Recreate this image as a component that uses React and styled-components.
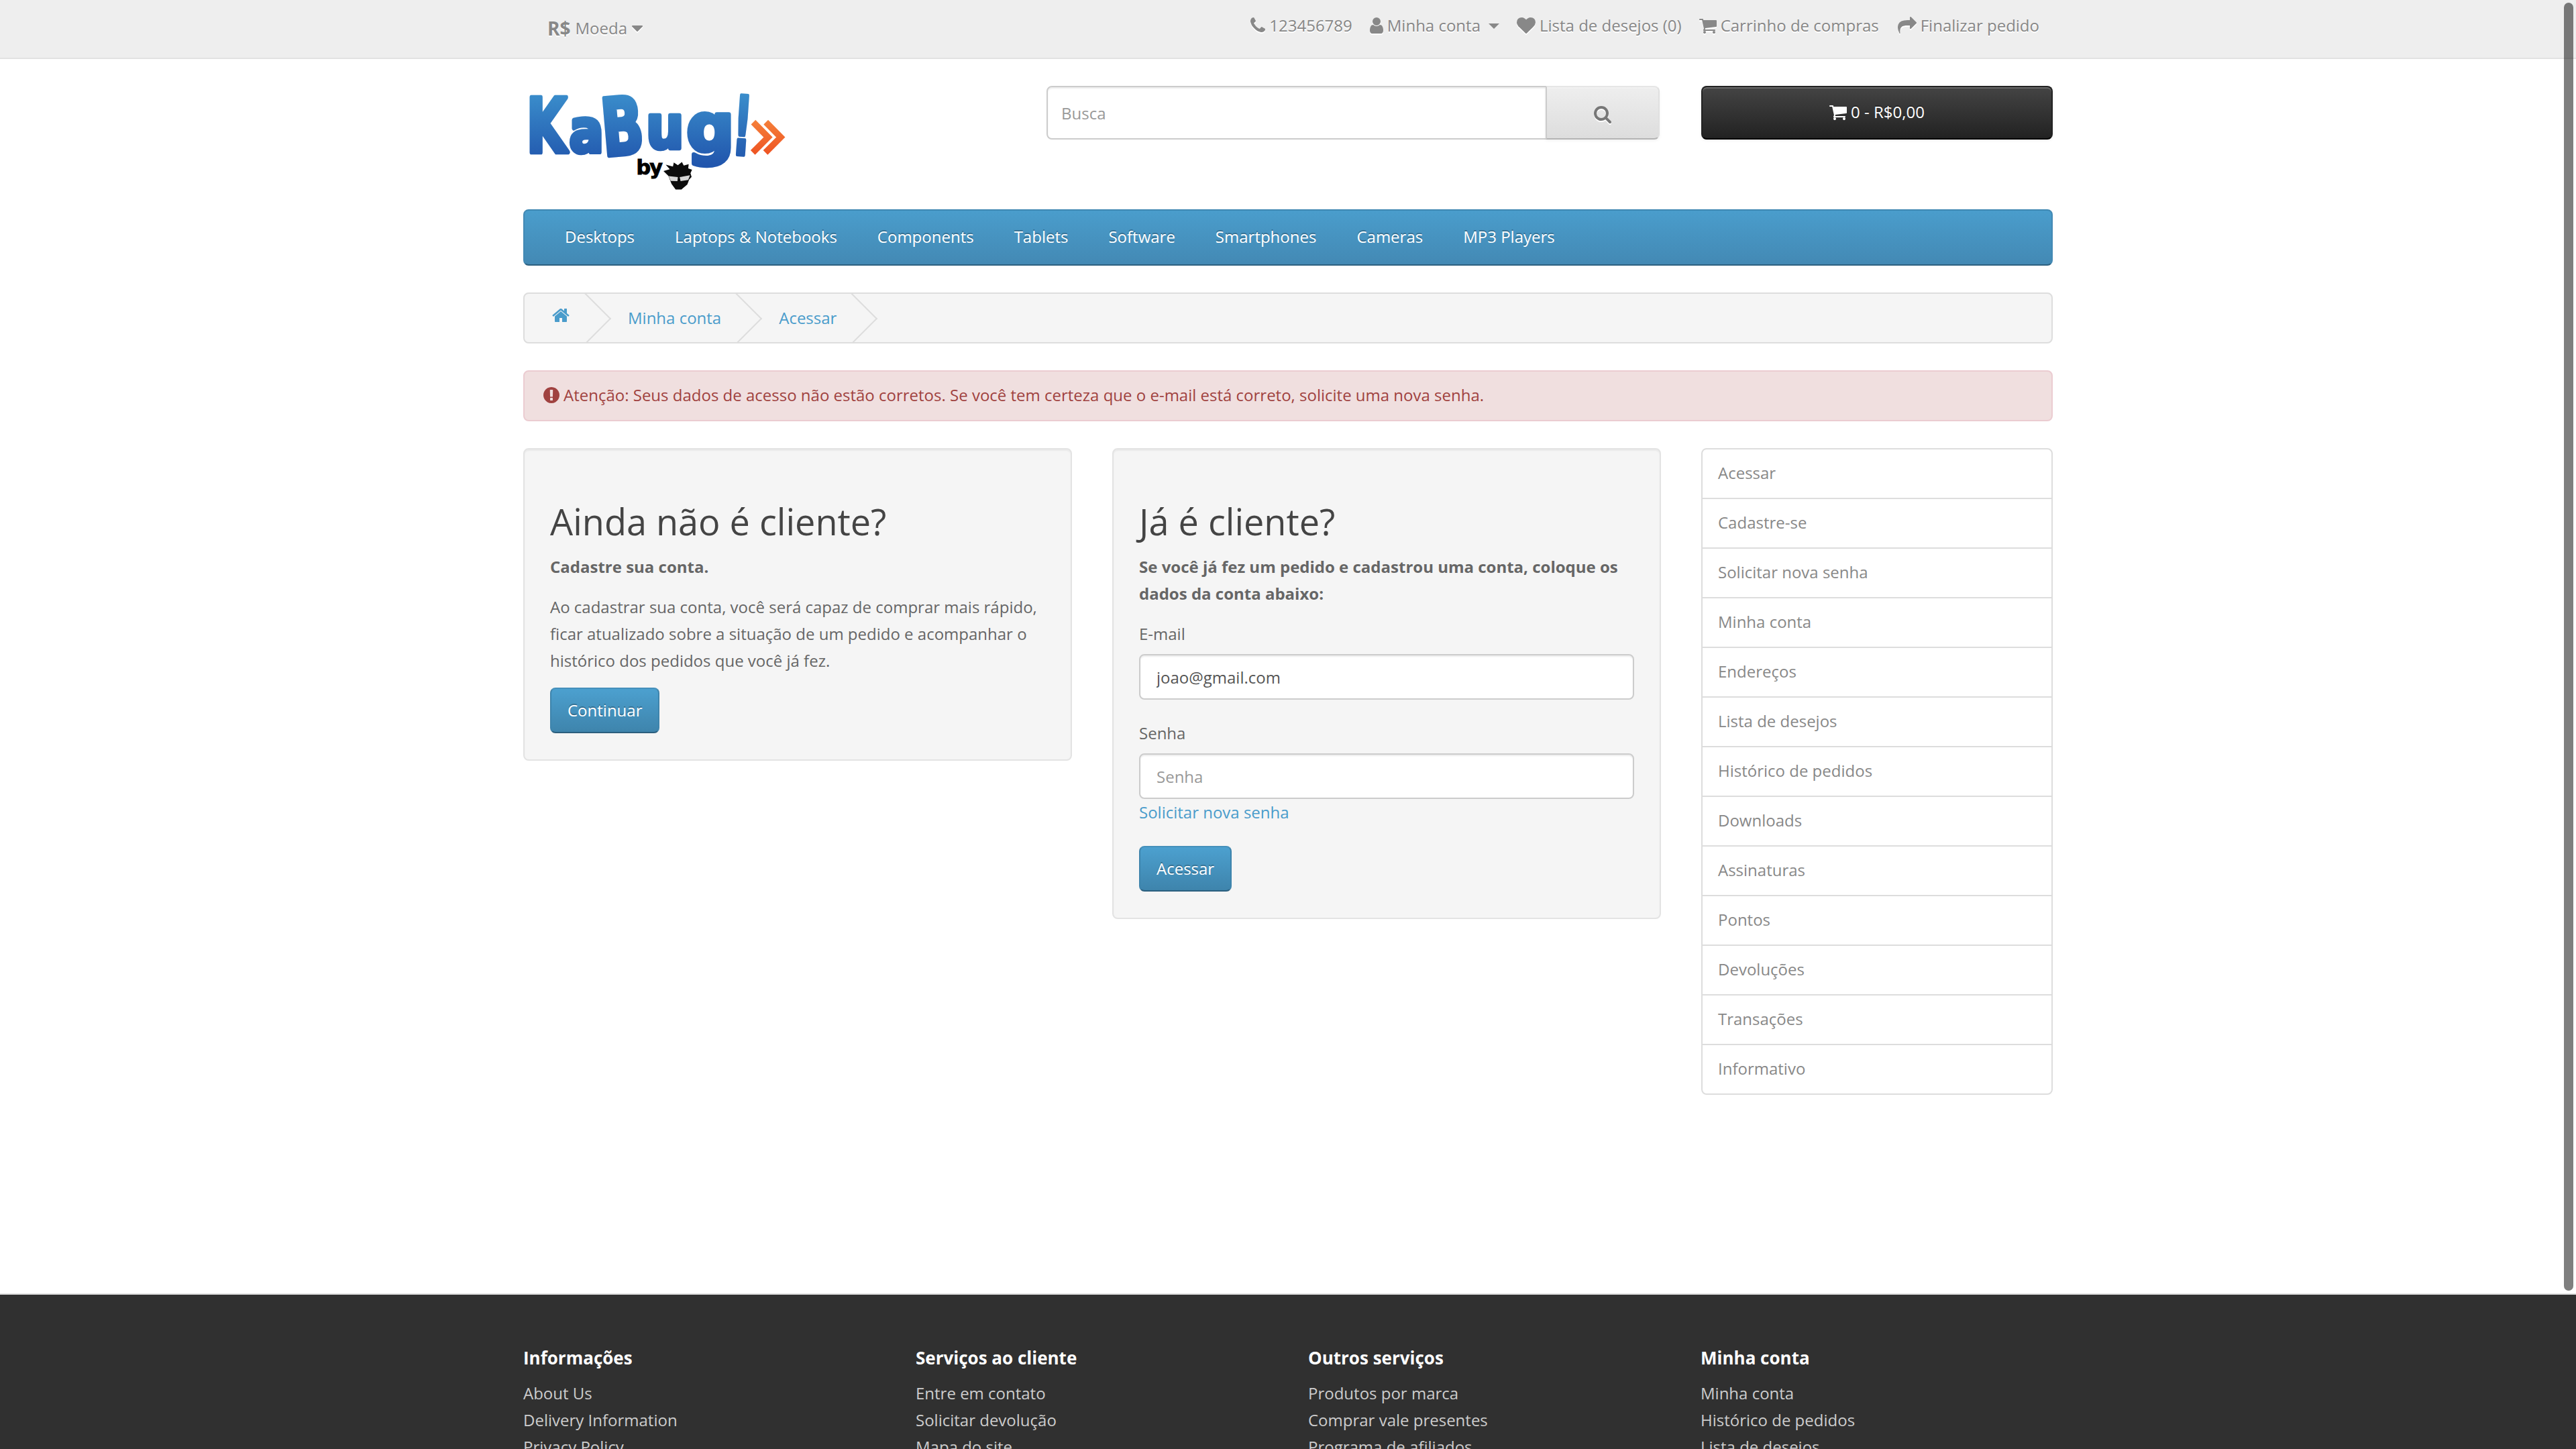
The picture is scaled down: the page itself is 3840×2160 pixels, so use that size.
import React from 'react';
import styled, { createGlobalStyle } from 'styled-components';

const Global = createGlobalStyle`
  html, body { margin: 0; padding: 0; height: 2160px; overflow: hidden; background: #fff; }
  body { font-family: "Open Sans", "Liberation Sans", sans-serif; font-size: 24px; line-height: 40px; color: #666; }
  * { box-sizing: border-box; }
  a { text-decoration: none; color: inherit; }
  ul { list-style: none; margin: 0; padding: 0; }
`;

const ICONS = {
  phone: 'M1600 1240q0 27-10 70.500t-21 68.500q-21 50-122 106-94 51-186 51-27 0-53-3.500t-57.500-12.500-47-14.500-55.500-20.500-49-18q-98-35-175-83-127-79-264-216t-216-264q-48-77-83-175-3-9-18-49t-20.500-55.500-14.500-47-12.500-57.500-3.500-53q0-92 51-186 56-101 106-122 25-11 68.500-21t70.500-10q14 0 21 3 18 6 53 76 11 19 30 54t35 63.500 31 53.500q3 4 17.500 25t21.500 35.500 7 28.500q0 20-28.500 50t-62 55-62 53-28.500 46q0 9 5 22.500t8.500 20.500 14 24 11.500 19q76 137 174 235t235 174q2 1 19 11.500t24 14 20.500 8.500 22.500 5q18 0 46-28.500t53-62 55-62 50-28.500q14 0 28.500 7t35.500 21.500 25 17.500q25 15 53.500 31t63.500 35 54 30q70 35 76 53 3 7 3 21z',
  user: 'M1536 1399q0 109-62.500 187t-150.500 78h-854q-88 0-150.500-78t-62.500-187q0-85 8.500-160.500t31.500-152 58.500-131 94-89 134.500-34.500q131 128 313 128t313-128q76 0 134.500 34.500t94 89 58.500 131 31.500 152 8.500 160.500zm-256-887q0 159-112.500 271.500t-271.500 112.500-271.500-112.500-112.500-271.500 112.500-271.500 271.500-112.500 271.500 112.500 112.500 271.500z',
  heart: 'M896 1664q-26 0-44-18l-624-602q-10-8-27.500-26t-55.500-65.500-68-97.500-53.500-121-23.500-138q0-220 127-344t351-124q62 0 126.500 21.500t120 58 95.500 68.500 76 68q36-36 76-68t95.500-68.500 120-58 126.500-21.500q224 0 351 124t127 344q0 221-229 450l-623 600q-18 18-44 18z',
  cart: 'M704 1536q0 52-38 90t-90 38-90-38-38-90 38-90 90-38 90 38 38 90zm896 0q0 52-38 90t-90 38-90-38-38-90 38-90 90-38 90 38 38 90zm128-1088v512q0 24-16.500 42.500t-40.500 21.500l-1044 122q13 60 13 70 0 16-24 64h920q26 0 45 19t19 45-19 45-45 19h-1024q-26 0-45-19t-19-45q0-11 8-31.500t16-36 21.500-40 15.500-29.500l-177-823h-204q-26 0-45-19t-19-45 19-45 45-19h256q16 0 28.500 6.500t19.500 15.500 13 24.500 8 26 5.500 29.500 4.500 26h1201q26 0 45 19t19 45z',
  share: 'M1792 640q0 26-19 45l-512 512q-19 19-45 19t-45-19-19-45v-256h-224q-98 0-175.500 6t-154 21.500-133 42.500-105.500 69.500-80 101-48.500 138.500-17.500 181q0 55 5 123 0 6 2.500 23.500t2.500 26.500q0 15-8.500 25t-23.500 10q-16 0-28-17-7-9-13-22t-13.500-30-10.500-24q-127-285-127-451 0-199 53-333 162-403 875-403h224v-256q0-26 19-45t45-19 45 19l512 512q19 19 19 45z',
  search: 'M1216 832q0-185-131.500-316.500t-316.500-131.500-316.500 131.500-131.500 316.500 131.500 316.500 316.500 131.500 316.500-131.500 131.500-316.500zm512 832q0 52-38 90t-90 38q-54 0-90-38l-343-342q-179 124-399 124-143 0-273.500-55.500t-225-150-150-225-55.500-273.500 55.500-273.500 150-225 225-150 273.500-55.500 273.500 55.500 225 150 150 225 55.500 273.500q0 220-124 399l343 343q37 37 37 90z',
  home: 'M1472 992v480q0 26-19 45t-45 19h-384v-384h-256v384h-384q-26 0-45-19t-19-45v-480q0-1 .5-3t.5-3l575-474 575 474q1 2 1 6zm223-69l-62 74q-8 9-21 11h-3q-13 0-21-7l-692-577-692 577q-12 8-24 7-13-2-21-11l-62-74q-8-10-7-23.500t11-21.500l719-599q32-26 76-26t76 26l244 204v-195q0-14 9-23t23-9h192q14 0 23 9t9 23v408l219 182q10 8 11 21.500t-7 23.500z',
  alert: 'M896 128q209 0 385.500 103t279.500 279.500 103 385.500-103 385.500-279.500 279.500-385.500 103-385.500-103-279.500-279.500-103-385.500 103-385.500 279.500-279.500 385.500-103zm128 1247v-190q0-14-9-23.500t-22-9.500h-192q-13 0-23 10t-10 23v190q0 13 10 23t23 10h192q13 0 22-9.500t9-23.500zm-2-344l18-621q0-12-10-18-10-8-24-8h-220q-14 0-24 8-10 6-10 18l17 621q0 10 10 17.500t24 7.500h185q14 0 23.500-7.500t10.500-17.500z',
  caret: 'M1408 704q0 26-19 45l-448 448q-19 19-45 19t-45-19l-448-448q-19-19-19-45t19-45 45-19h896q26 0 45 19t19 45z',
};
const ADVANCE = { phone: 22, user: 20, heart: 28, cart: 26, share: 28, search: 26, home: 28, alert: 24, caret: 16 };

const IconSvg = styled.svg`
  display: block;
  flex: none;
  width: 28px;
  height: 28px;
  margin: 0 ${p => (ADVANCE[p.$name] - 28) / 2}px;
  fill: currentColor;
`;
const Icon = ({ name }) => (
  <IconSvg $name={name} viewBox="0 0 1792 1792"><path d={ICONS[name]} /></IconSvg>
);

const Page = styled.div`
  width: 3840px;
  height: 2160px;
  overflow: hidden;
  position: relative;
`;
const Container = styled.div`
  width: 2280px;
  margin: 0 auto;
`;
const TopBar = styled.nav`
  height: 88px;
  background: #eee;
  border-bottom: 2px solid #e2e2e2;
  margin-bottom: 40px;
  color: #888;
  text-shadow: 0 2px 0 #fff;
  svg { filter: drop-shadow(0 2px 0 #fff); }
`;
const TopInner = styled(Container)`
  display: flex;
  justify-content: space-between;
  height: 86px;
`;
const Currency = styled.div`
  display: flex;
  align-items: center;
  margin: 2px 0 0 36px;
  height: 80px;
  gap: 7px;
  strong { font-size: 28px; font-weight: 700; }
`;
const TopLinks = styled.ul`
  display: flex;
  gap: 26px;
  padding: 18px 20px 0 0;
`;
const TopLink = styled.li`
  display: flex;
  align-items: center;
  height: 40px;
  gap: 6px;
  white-space: nowrap;
  &:last-child { margin-left: 2px; }
`;
const Caret = styled.i`
  display: block;
  width: 0;
  height: 0;
  margin: 2px 0 0 6px;
  border-top: 8px solid #888;
  border-left: 8px solid transparent;
  border-right: 8px solid transparent;
`;
const HeaderRow = styled(Container)`
  display: grid;
  grid-template-columns: 720px 916px 524px;
  column-gap: 60px;
  height: 184px;
`;
const Logo = styled.svg`
  display: block;
  width: 410px;
  height: 180px;
`;
const SearchGroup = styled.div`
  display: flex;
  width: 914px;
  height: 80px;
`;
const SearchInput = styled.input`
  flex: 1;
  min-width: 0;
  height: 80px;
  padding: 0 20px;
  font: 24px/40px "Open Sans", sans-serif;
  color: #555;
  background: #fff;
  border: 2px solid #ccc;
  border-radius: 8px 0 0 8px;
  box-shadow: inset 0 2px 2px rgba(0,0,0,.075);
  &::placeholder { color: #999; opacity: 1; }
`;
const SearchButton = styled.button`
  width: 170px;
  height: 80px;
  margin-left: -2px;
  display: flex;
  align-items: center;
  justify-content: center;
  color: #777;
  background: linear-gradient(to bottom, #eee, #ddd);
  border: 2px solid #ccc;
  border-color: #e6e6e6 #e0e0e0 #b3b3b3 #ccc;
  border-radius: 0 8px 8px 0;
  box-shadow: inset 0 2px 0 rgba(255,255,255,.2), 0 2px 4px rgba(0,0,0,.05);
  svg { margin-top: 4px; filter: drop-shadow(0 2px 0 #fff); }
`;
const CartButton = styled.button`
  width: 100%;
  height: 80px;
  display: flex;
  align-items: center;
  justify-content: center;
  gap: 6px;
  padding: 0 0 3px;
  font: 24px/36px "Open Sans", sans-serif;
  color: #fff;
  text-shadow: 0 -2px 0 rgba(0,0,0,.25);
  background: linear-gradient(to bottom, #444, #222);
  border: 2px solid #222;
  border-bottom-color: #000;
  border-radius: 8px;
  box-shadow: inset 0 2px 0 rgba(255,255,255,.2), 0 2px 4px rgba(0,0,0,.05);
`;
const Menu = styled.nav`
  height: 84px;
  margin-bottom: 40px;
  padding: 0 30px;
  display: flex;
  background: linear-gradient(to bottom, #4a9dcc, #4389b4);
  border: 2px solid #4389b4;
  border-top-color: #3f88b2;
  border-bottom-color: #2d6180;
  border-radius: 8px;
`;
const MenuLink = styled.a`
  padding: 19px 30px;
  line-height: 40px;
  color: #fff;
  text-shadow: 0 -2px 0 rgba(0,0,0,.25);
`;
const Breadcrumb = styled.ul`
  display: flex;
  gap: 6px;
  height: 76px;
  margin-bottom: 40px;
  padding: 16px 0;
  background: #f5f5f5;
  border: 2px solid #ddd;
  border-radius: 8px;
  overflow: hidden;
`;
const Crumb = styled.li`
  position: relative;
  padding: 0 40px;
  color: #4a9ccb;
  svg { margin-top: 2px; }
  &::after {
    content: '';
    position: absolute;
    top: -6px;
    right: -10px;
    width: 52px;
    height: 52px;
    border-right: 2px solid #ddd;
    border-bottom: 2px solid #ddd;
    transform: rotate(-45deg);
  }
`;
const Alert = styled.div`
  display: flex;
  align-items: center;
  gap: 6px;
  height: 76px;
  margin-bottom: 40px;
  padding: 0 28px 2px;
  color: #a04240;
  background: #f0dfdf;
  border: 2px solid #ebccd1;
  border-radius: 8px;
`;
const ContentRow = styled(Container)`
  display: grid;
  grid-template-columns: 818px 818px 524px;
  column-gap: 60px;
  align-items: start;
  min-height: 1200px;
`;
const Well = styled.section`
  padding: 38px 38px 39px;
  background: #f5f5f5;
  border: 2px solid #e3e3e3;
  border-radius: 8px;
  box-shadow: inset 0 2px 2px rgba(0,0,0,.05);
`;
const Title = styled.h2`
  margin: 40px 0 18px;
  font-size: 54px;
  line-height: 1.1;
  font-weight: 400;
  color: #444;
`;
const Paragraph = styled.p`
  margin: 0 0 20px;
  strong { font-weight: 700; }
`;
const PrimaryButton = styled.button`
  display: block;
  height: 68px;
  padding: 0 24px;
  font: 24px/34px "Open Sans", sans-serif;
  color: #fff;
  text-shadow: 0 -2px 0 rgba(0,0,0,.25);
  background: linear-gradient(to bottom, #4ca0cf, #3e84ac);
  border: 2px solid #3e84ac;
  border-top-color: #4590bb;
  border-bottom-color: #2b5f7e;
  border-radius: 8px;
`;
const Field = styled.div`
  margin-bottom: 30px;
`;
const Label = styled.label`
  display: block;
  margin-bottom: 10px;
`;
const Input = styled.input`
  display: block;
  width: 100%;
  height: 68px;
  padding: 12px 24px;
  font: 24px/34px "Open Sans", sans-serif;
  color: #555;
  background: #fff;
  border: 2px solid #ccc;
  border-radius: 8px;
  box-shadow: inset 0 2px 2px rgba(0,0,0,.075);
  &::placeholder { color: #999; opacity: 1; }
`;
const ForgotLink = styled.a`
  display: block;
  color: #4a9ccb;
`;
const SideList = styled.div`
  display: flex;
  flex-direction: column;
`;
const SideItem = styled.a`
  display: block;
  height: 76px;
  margin-bottom: -2px;
  padding: 15px 23px;
  color: #888;
  background: #fff;
  border: 2px solid #ddd;
  &:first-child { border-radius: 8px 8px 0 0; }
  &:last-child { border-radius: 0 0 8px 8px; margin-bottom: 0; }
`;
const Footer = styled.footer`
  margin-top: 60px;
  padding-top: 60px;
  height: 400px;
  background: #303030;
  border-top: 2px solid #ddd;
`;
const FooterGrid = styled(Container)`
  display: grid;
  grid-template-columns: repeat(4, 525px);
  column-gap: 60px;
`;
const FooterTitle = styled.h5`
  margin: 20px 0 18px;
  font-size: 26px;
  line-height: 1.1;
  font-weight: 700;
  color: #fff;
`;
const FooterLink = styled.li`
  color: #ccc;
  height: 40px;
`;
const Scrollbar = styled.div`
  position: absolute;
  top: 4px;
  left: 3822px;
  width: 14px;
  height: 1920px;
  border-radius: 7px;
  background: rgba(0,0,0,.5);
`;

const KaBugLogo = () => (
  <Logo viewBox="30 24 1222 536" aria-label="KaBug!">
    <defs>
      <linearGradient id="kb" gradientUnits="userSpaceOnUse" x1="0" y1="60" x2="0" y2="370">
        <stop offset="0" stopColor="#3a8dcb" />
        <stop offset="1" stopColor="#2156ad" />
      </linearGradient>
      <linearGradient id="kbo" gradientUnits="userSpaceOnUse" x1="0" y1="175" x2="0" y2="330">
        <stop offset="0" stopColor="#f5803a" />
        <stop offset="1" stopColor="#ee5322" />
      </linearGradient>
      <mask id="kbm" maskUnits="userSpaceOnUse" x="0" y="0" width="1260" height="540">
        <g fontFamily="DejaVu Sans" fontWeight="700" fill="#fff" stroke="#fff" strokeWidth="20" strokeLinejoin="round">
          <text transform="translate(44 320) scale(.69 1)" fontSize="336">K</text>
          <text transform="translate(234 320) scale(.85 1)" fontSize="267">a</text>
          <text transform="translate(388 335) rotate(-5) scale(.7 1)" fontSize="350">B</text>
          <text transform="translate(576 300) scale(.88 1)" fontSize="267">u</text>
          <text transform="translate(755 314)" fontSize="297">g</text>
          <text transform="translate(955 325) rotate(4) scale(.5 1)" fontSize="357">!</text>
        </g>
      </mask>
    </defs>
    <rect x="0" y="0" width="1260" height="540" fill="url(#kb)" mask="url(#kbm)" />
    <g fill="none" stroke="url(#kbo)" strokeWidth="28" strokeLinejoin="miter">
      <path d="M1052 185 L1118 252 L1050 320" />
      <path d="M1108 185 L1174 252 L1106 320" />
    </g>
    <text x="532" y="418" fontFamily="DejaVu Sans" fontWeight="700" fontSize="90" letterSpacing="-5" fill="#000" stroke="#000" strokeWidth="3">by</text>
    <path transform="translate(-5 0)" d="M658 402 L686 394 L668 374 L700 382 L704 364 L722 376 L740 362 L748 378 L770 372 L768 390 L785 396 L778 412 L783 428 L772 440 L764 462 L738 484 L712 484 L694 460 L680 424 L670 414 Z" fill="#0c0c0c" />
    <path transform="translate(-5 0)" d="M681 425 L722 429 L720 447 L690 446 Z M730 429 L776 421 L768 442 L734 447 Z" fill="#d6d6d6" />
  </Logo>
);

const menu = ['Desktops', 'Laptops & Notebooks', 'Components', 'Tablets', 'Software', 'Smartphones', 'Cameras', 'MP3 Players'];
const side = ['Acessar', 'Cadastre-se', 'Solicitar nova senha', 'Minha conta', 'Endereços', 'Lista de desejos', 'Histórico de pedidos', 'Downloads', 'Assinaturas', 'Pontos', 'Devoluções', 'Transações', 'Informativo'];
const footer = [
  ['Informações', ['About Us', 'Delivery Information', 'Privacy Policy']],
  ['Serviços ao cliente', ['Entre em contato', 'Solicitar devolução', 'Mapa do site']],
  ['Outros serviços', ['Produtos por marca', 'Comprar vale presentes', 'Programa de afiliados']],
  ['Minha conta', ['Minha conta', 'Histórico de pedidos', 'Lista de desejos']],
];

export default function App() {
  return (
    <Page>
      <Global />
      <TopBar>
        <TopInner>
          <Currency><strong>R$</strong><span>Moeda</span><Icon name="caret" /></Currency>
          <TopLinks>
            <TopLink><Icon name="phone" />123456789</TopLink>
            <TopLink><Icon name="user" />Minha conta<Caret /></TopLink>
            <TopLink><Icon name="heart" />Lista de desejos (0)</TopLink>
            <TopLink><Icon name="cart" />Carrinho de compras</TopLink>
            <TopLink><Icon name="share" />Finalizar pedido</TopLink>
          </TopLinks>
        </TopInner>
      </TopBar>
      <HeaderRow>
        <KaBugLogo />
        <SearchGroup>
          <SearchInput placeholder="Busca" />
          <SearchButton aria-label="Buscar"><Icon name="search" /></SearchButton>
        </SearchGroup>
        <CartButton><Icon name="cart" />0 - R$0,00</CartButton>
      </HeaderRow>
      <Container>
        <Menu>{menu.map(m => <MenuLink key={m}>{m}</MenuLink>)}</Menu>
        <Breadcrumb>
          <Crumb><Icon name="home" /></Crumb>
          <Crumb>Minha conta</Crumb>
          <Crumb>Acessar</Crumb>
        </Breadcrumb>
        <Alert><Icon name="alert" />Atenção: Seus dados de acesso não estão corretos. Se você tem certeza que o e-mail está correto, solicite uma nova senha.</Alert>
      </Container>
      <ContentRow>
        <Well>
          <Title>Ainda não é cliente?</Title>
          <Paragraph><strong>Cadastre sua conta.</strong></Paragraph>
          <Paragraph>Ao cadastrar sua conta, você será capaz de comprar mais rápido, ficar atualizado sobre a situação de um pedido e acompanhar o histórico dos pedidos que você já fez.</Paragraph>
          <PrimaryButton>Continuar</PrimaryButton>
        </Well>
        <Well>
          <Title>Já é cliente?</Title>
          <Paragraph><strong>Se você já fez um pedido e cadastrou uma conta, coloque os dados da conta abaixo:</strong></Paragraph>
          <Field>
            <Label>E-mail</Label>
            <Input defaultValue="joao@gmail.com" />
          </Field>
          <Field>
            <Label>Senha</Label>
            <Input placeholder="Senha" />
            <ForgotLink>Solicitar nova senha</ForgotLink>
          </Field>
          <PrimaryButton>Acessar</PrimaryButton>
        </Well>
        <SideList>{side.map(s => <SideItem key={s}>{s}</SideItem>)}</SideList>
      </ContentRow>
      <Footer>
        <FooterGrid>
          {footer.map(([title, links]) => (
            <div key={title}>
              <FooterTitle>{title}</FooterTitle>
              <ul>{links.map(l => <FooterLink key={l}>{l}</FooterLink>)}</ul>
            </div>
          ))}
        </FooterGrid>
      </Footer>
      <Scrollbar />
    </Page>
  );
}
